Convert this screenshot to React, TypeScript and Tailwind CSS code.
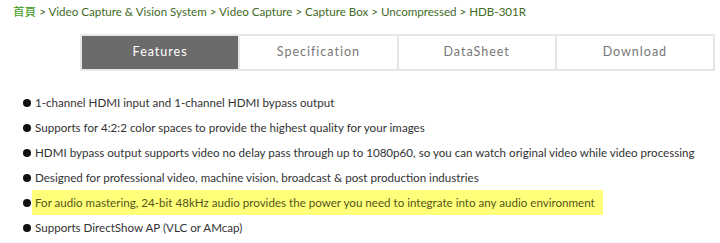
import React from 'react';

const tabs = ['Features', 'Specification', 'DataSheet', 'Download'];

const features = [
  { text: '1-channel HDMI input and 1-channel HDMI bypass output' },
  { text: 'Supports for 4:2:2 color spaces to provide the highest quality for your images' },
  { text: 'HDMI bypass output supports video no delay pass through up to 1080p60, so you can watch original video while video processing' },
  { text: 'Designed for professional video, machine vision, broadcast & post production industries' },
  { text: 'For audio mastering, 24-bit 48kHz audio provides the power you need to integrate into any audio environment', highlight: true },
  { text: 'Supports DirectShow AP (VLC or AMcap)' },
];

export default function App() {
  return (
    <div className="w-[720px] h-[243px] bg-white overflow-hidden" style={{ fontFamily: 'Lato, "Noto Sans CJK TC", sans-serif' }}>
      {/* Breadcrumb */}
      <div className="pl-[13px] pt-[1px] h-[22px] flex items-center text-[11.6px] text-[#3f6a1f] whitespace-nowrap">
        <span className="text-[#3d9a1a]">首頁</span>
        <span>&nbsp;&gt; Video Capture &amp; Vision System &gt; Video Capture &gt; Capture Box &gt; Uncompressed &gt; HDB-301R</span>
      </div>

      {/* Tabs */}
      <div className="ml-[80px] mt-[12px] w-[635px] h-[37px] flex">
        {tabs.map((t, i) => (
          <div
            key={t}
            className={`flex-1 flex items-center justify-center text-[12.5px] tracking-[1px] border-2 ${
              i === 0 ? 'bg-[#6b6b6b] border-[#e8e8e8] text-white' : 'bg-white border-[#e6e6e6] text-[#777]'
            } ${i > 0 ? 'border-l-0' : ''}`}
          >
            {t}
          </div>
        ))}
      </div>

      {/* Feature list */}
      <ul className="mt-[19px] pl-[23px] flex flex-col">
        {features.map((f) => (
          <li key={f.text} className="h-[25px] flex items-center text-[11.6px] text-[#333] whitespace-nowrap">
            <span className="w-[8px] h-[8px] rounded-full bg-[#111] shrink-0 mr-[4px]" />
            <span className={f.highlight ? 'bg-[#ffff7a] text-[#55551a] h-[25px] flex items-center pl-[3px] pr-[8px] ml-[-3px]' : ''}>
              {f.text}
            </span>
          </li>
        ))}
      </ul>
    </div>
  );
}
